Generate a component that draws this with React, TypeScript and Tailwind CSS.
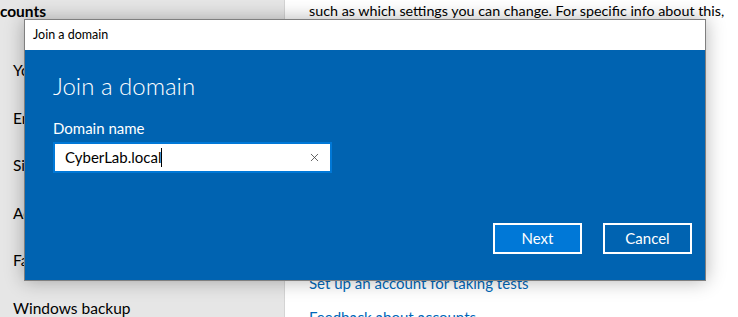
import { X } from "lucide-react";

const font = { fontFamily: 'Lato, "Noto Sans", sans-serif' };

const sideItems = ["Your info", "Email & accounts", "Sign-in options", "Access work or school", "Family & other users", "Windows backup"];

function Background() {
  return (
    <div className="flex h-[317px] w-[738px] overflow-hidden" style={font}>
      <div className="relative w-[285px] shrink-0 bg-[#e6e6e6] border-r border-[#d4d4d4] text-[15.5px] text-black">
        <div className="-ml-[18px] pt-[1px] font-bold leading-[20px]">Accounts</div>
        <ul className="pl-[13px] pt-[39px] flex flex-col gap-[27.5px] leading-[20px]">
          {sideItems.map((s) => (
            <li key={s} className="whitespace-nowrap">
              {s}
            </li>
          ))}
        </ul>
      </div>
      <div className="flex-1 bg-white pl-[24px] text-[14.3px] leading-[20px]">
        <p className="pt-[1px] text-black whitespace-nowrap">
          such as which settings you can change. For specific info about this,
          <br />
          ask them.
        </p>
        <div className="pt-[232px] flex flex-col gap-[14px] text-[15px] text-[#0067b8]">
          <span>Set up an account for taking tests</span>
          <span>Feedback about accounts</span>
        </div>
      </div>
    </div>
  );
}

function JoinDialog() {
  return (
    <div
      className="absolute left-[24px] top-[19px] w-[682px] h-[262px] border border-[#7f7f7f] bg-[#0063b1] shadow-[0_0_18px_rgba(0,0,0,0.3)] flex flex-col"
      style={font}
    >
      <div className="h-[30px] bg-white pl-[8px] flex items-center text-[12.5px] text-black">Join a domain</div>
      <div className="flex-1 flex flex-col pl-[28px] pr-[13px] pb-[26px] text-white">
        <h1 className="pt-[20px] text-[24px] font-light leading-[32px]">Join a domain</h1>
        <label className="mt-[17px] text-[15px] leading-[18px]">Domain name</label>
        <div className="mt-[5px] w-[279px] h-[31px] border-2 border-[#0078d7] bg-white flex items-center pl-[10px] pr-[9px]">
          <span className="text-[15px] text-black leading-none">CyberLab.local</span>
          <span className="w-[1px] h-[19px] bg-black" />
          <X className="ml-auto text-[#444]" size={13} strokeWidth={1.5} />
        </div>
        <div className="mt-auto flex justify-end gap-[21px]">
          <button className="w-[89px] h-[31px] border-2 border-white bg-[#0078d7] text-[15px] text-white">Next</button>
          <button className="w-[89px] h-[31px] border-2 border-white text-[15px] text-white">Cancel</button>
        </div>
      </div>
    </div>
  );
}

export default function App() {
  return (
    <div className="relative w-[738px] h-[317px] overflow-hidden">
      <Background />
      <JoinDialog />
    </div>
  );
}
